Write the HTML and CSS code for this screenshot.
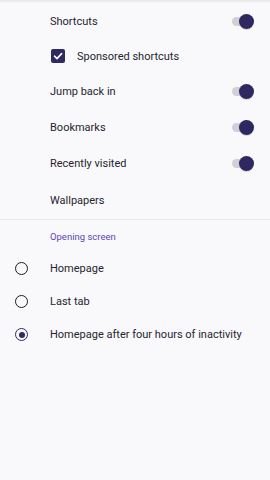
FILE: index.html
```html
<!DOCTYPE html>
<html lang="en">

<head>
    <meta charset="UTF-8">
    <meta name="viewport" content="width=device-width, initial-scale=1.0">
    <title>Homepage settings</title>
    <link rel="stylesheet" href="styles.css">
</head>

<body>
    <div class="top-shade"></div>

    <ul class="pref-list">
        <li class="pref-row">
            <span class="pref-label">Shortcuts</span>
            <span class="switch on"><span class="thumb"></span></span>
        </li>
        <li class="pref-row sub">
            <span class="checkbox">
                <svg viewBox="0 0 14 14" width="14" height="14">
                    <path d="M3.5 7.2 L6 9.6 L10.6 4.6" fill="none" stroke="#fff" stroke-width="1.6" stroke-linecap="round" stroke-linejoin="round" />
                </svg>
            </span>
            <span class="pref-label">Sponsored shortcuts</span>
        </li>
        <li class="pref-row">
            <span class="pref-label">Jump back in</span>
            <span class="switch on"><span class="thumb"></span></span>
        </li>
        <li class="pref-row">
            <span class="pref-label">Bookmarks</span>
            <span class="switch on"><span class="thumb"></span></span>
        </li>
        <li class="pref-row">
            <span class="pref-label">Recently visited</span>
            <span class="switch on"><span class="thumb"></span></span>
        </li>
        <li class="pref-row last">
            <span class="pref-label">Wallpapers</span>
        </li>
    </ul>

    <div class="divider"></div>

    <div class="section-title">Opening screen</div>

    <ul class="radio-list">
        <li class="radio-row">
            <span class="radio"></span>
            <span class="pref-label">Homepage</span>
        </li>
        <li class="radio-row">
            <span class="radio"></span>
            <span class="pref-label">Last tab</span>
        </li>
        <li class="radio-row">
            <span class="radio checked"></span>
            <span class="pref-label">Homepage after four hours of inactivity</span>
        </li>
    </ul>
</body>

</html>
```

FILE: styles.css
```css
* {
    margin: 0;
    padding: 0;
    box-sizing: border-box;
}

body {
    background: #f9f9fb;
    font-family: Roboto, "Noto Sans", sans-serif;
    color: #26242f;
    width: 270px;
    height: 480px;
    overflow: hidden;
}

.top-shade {
    height: 3px;
    background: linear-gradient(#e4e4e8, #f9f9fb);
}

ul {
    list-style: none;
}

.pref-row {
    height: 36px;
    display: flex;
    align-items: center;
    padding-left: 50px;
    padding-right: 16px;
}

.pref-row.sub {
    height: 34px;
    padding-left: 51px;
}

.pref-row.last {
    height: 38px;
}

.pref-label {
    font-size: 11px;
    flex: 1;
}

.checkbox {
    width: 14px;
    height: 14px;
    border-radius: 2px;
    background: #302a62;
    display: flex;
    margin-right: 12px;
}

.switch {
    position: relative;
    width: 18px;
    height: 9px;
    border-radius: 5px;
    background: #d0d0d8;
    margin-right: 4px;
}

.switch .thumb {
    position: absolute;
    right: -4px;
    top: -3px;
    width: 15px;
    height: 15px;
    border-radius: 50%;
    background: #2e2861;
    box-shadow: 0 1px 1px rgba(0, 0, 0, 0.15);
}

.divider {
    height: 1px;
    background: #e8e8ec;
}

.section-title {
    height: 32px;
    display: flex;
    align-items: center;
    padding-left: 50px;
    font-size: 9.5px;
    color: #5b45b8;
}

.radio-row {
    height: 33px;
    display: flex;
    align-items: center;
    padding-left: 15px;
}

.radio {
    width: 13px;
    height: 13px;
    border-radius: 50%;
    border: 1.6px solid #1d1b26;
    margin-right: 22px;
    display: flex;
    align-items: center;
    justify-content: center;
}

.radio.checked {
    border-color: #302a62;
}

.radio.checked::after {
    content: '';
    width: 6px;
    height: 6px;
    border-radius: 50%;
    background: #302a62;
}
```
